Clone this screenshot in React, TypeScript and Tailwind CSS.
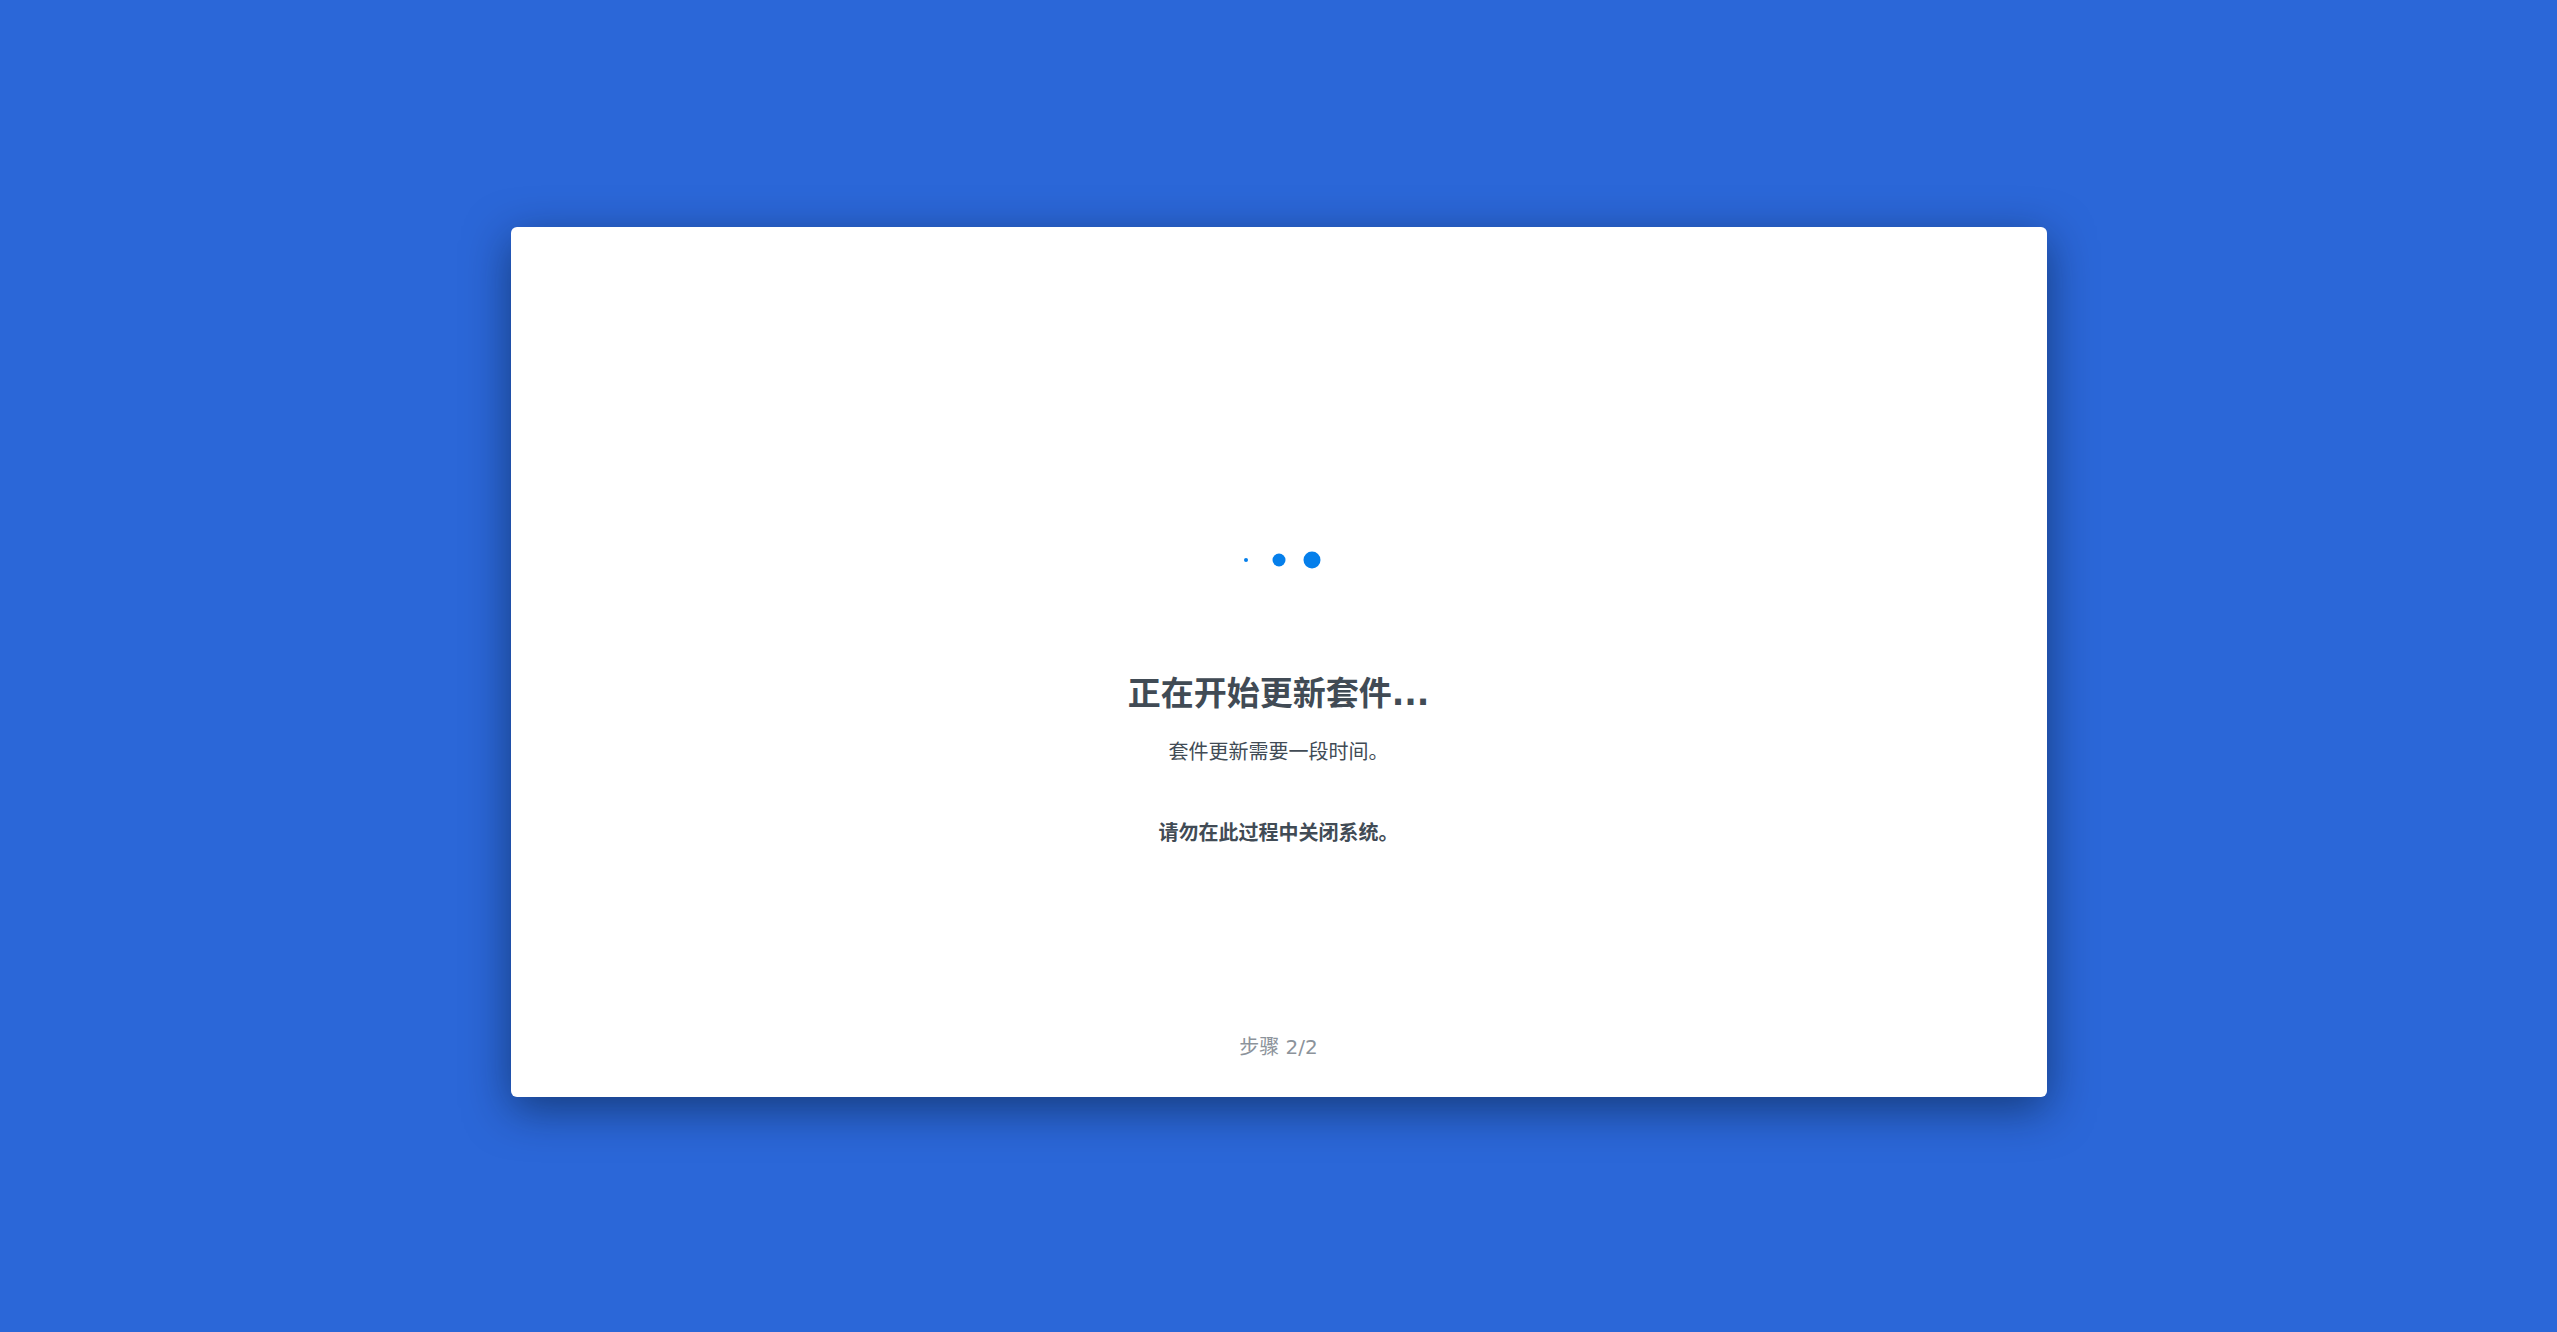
import React from 'react';

interface LoadingDotsProps {
  label: string;
}

const LoadingDots: React.FC<LoadingDotsProps> = ({ label }) => {
  return (
    <svg role="img" aria-label={label} className="h-8 w-24 fill-[#057feb]" viewBox="0 0 96 32">
      <circle cx="15" cy="16" r="2" />
      <circle cx="48" cy="16" r="6.5" />
      <circle cx="81" cy="16" r="8.5" />
    </svg>
  );
};

interface StepIndicatorProps {
  current: number;
  total: number;
}

const StepIndicator: React.FC<StepIndicatorProps> = ({ current, total }) => {
  return (
    <footer className="text-xl leading-7 text-[#8c939b]">
      {`步骤 ${current}/${total}`}
    </footer>
  );
};

export default function App() {
  return (
    <div
      lang="zh-CN"
      className="flex min-h-screen items-center justify-center bg-[#2b67d8] pb-2 font-['DejaVu_Sans','Noto_Sans_CJK_SC',sans-serif] text-[#414b55]"
    >
      <main className="flex w-full max-w-screen-2xl flex-col items-center rounded-md bg-white pt-[317px] pb-9 text-center shadow-[0_12px_45px_rgba(0,16,32,0.5)]">
        <LoadingDots label="正在更新" />
        <h1 className="mt-[94px] text-[33px] leading-12 font-bold">正在开始更新套件...</h1>
        <p className="mt-5 text-xl leading-7">套件更新需要一段时间。</p>
        <p className="mt-[53px] mb-[186px] text-xl leading-7 font-bold">请勿在此过程中关闭系统。</p>
        <StepIndicator current={2} total={2} />
      </main>
    </div>
  );
}
